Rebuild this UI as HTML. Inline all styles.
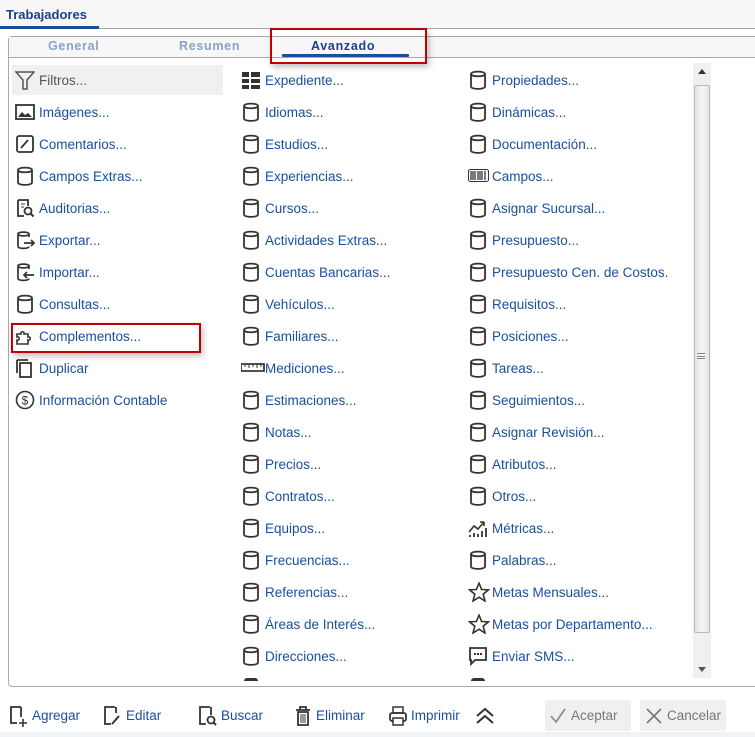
<!DOCTYPE html>
<html><head><meta charset="utf-8"><style>
*{margin:0;padding:0;box-sizing:border-box}
body{width:755px;height:737px;background:#fff;font-family:"Liberation Sans",sans-serif;position:relative;overflow:hidden}
.hdr{position:absolute;left:0;top:0;width:755px;height:29px;background:#f7f7f7;border-bottom:1px solid #aaa}
.hdr span{position:absolute;left:6px;top:7px;font-weight:bold;font-size:13px;color:#1c3f8f}
.hdr i{position:absolute;left:0;top:26px;width:99px;height:3px;background:#1a4fa0}
.panel{position:absolute;left:8px;top:36px;width:752px;height:651px;border:1px solid #aaa;border-radius:4px}
.tabs{position:absolute;left:9px;top:37px;width:746px;height:21px;background:#f7f7f7;border-bottom:1px solid #aaa}
.tab{position:absolute;top:2px;font-weight:bold;font-size:12.5px;letter-spacing:.7px;color:#8aa3cb}
.red{position:absolute;border:2px solid #c00000;box-shadow:2px 3px 6px rgba(0,0,0,.25)}
.it{position:absolute;height:22px;line-height:22px;font-size:13.5px;color:#1a4fa0;white-space:nowrap;margin-top:1px}
.it svg{position:absolute;left:0;top:0}
.it span{position:absolute;left:24px;top:0}
.sb{position:absolute;left:693px;top:63px;width:18px;height:615px;background:#f0f0f0}
.thumb{position:absolute;left:694px;top:85px;width:16px;height:548px;background:linear-gradient(90deg,#e4e4e4,#f6f6f6,#e4e4e4);border:1px solid #bbb;border-radius:2px}
.bt{position:absolute;top:705px;height:22px;line-height:22px;font-size:13.5px;color:#1a4fa0}
.bt svg{position:absolute;left:0;top:0}
.bt span{position:absolute;left:23px;white-space:nowrap}
.gb{position:absolute;top:700px;height:31px;background:#f0f0f0;color:#777;font-size:13.5px;line-height:31px}
</style></head><body>
<div class="hdr"><span>Trabajadores</span><i></i></div>
<div class="panel"></div>
<div class="tabs"></div>
<div class="tab" style="left:48px;top:39px">General</div>
<div class="tab" style="left:179px;top:39px">Resumen</div>
<div class="tab" style="left:311px;top:39px;color:#1c3f8f">Avanzado</div>
<div style="position:absolute;left:282px;top:54px;width:127px;height:3px;background:#1a4fa0;border-radius:1px"></div>
<div class="red" style="left:270px;top:28px;width:157px;height:36px"></div>
<div style="position:absolute;left:12px;top:65px;width:211px;height:30px;background:#f0f0f0"></div>
<div class="red" style="left:11px;top:323px;width:190px;height:30px"></div>
<div class="sb"></div><div class="thumb"></div>
<div style="position:absolute;left:698px;top:69px;border:4px solid transparent;border-bottom:5px solid #333;border-top:0"></div>
<div style="position:absolute;left:698px;top:667px;border:4px solid transparent;border-top:5px solid #555;border-bottom:0"></div>
<div style="position:absolute;left:697px;top:353px;width:8px;height:6px;border-top:1px solid #888;border-bottom:1px solid #888"></div>
<div style="position:absolute;left:697px;top:356px;width:8px;height:1px;background:#888"></div>
<div style="position:absolute;left:0;top:732px;width:755px;height:5px;background:#eef3f8"></div>

<svg width="0" height="0" style="position:absolute"><defs>
<symbol id="cyl" viewBox="0 0 20 20"><path d="M3 4C3 0.8 17 0.8 17 4V16.5C17 19.7 3 19.7 3 16.5Z M3 4C3 7 17 7 17 4" fill="none" stroke="#333" stroke-width="1.8"/></symbol>
</defs></svg>

<div class="it" style="left:15px;top:69px;color:#555"><svg width="20" height="20"><path d="M1 2H19L12 10V19H8V10Z" fill="none" stroke="#555" stroke-width="1.5"/></svg><span>Filtros...</span></div>
<div class="it" style="left:15px;top:101px"><svg width="20" height="20"><rect x="1" y="3" width="18" height="14" fill="none" stroke="#333" stroke-width="1.8"/><path d="M3 15L7 10L10 13L13 11L17 15Z" fill="#333"/></svg><span>Imágenes...</span></div>
<div class="it" style="left:15px;top:133px"><svg width="20" height="20"><rect x="2" y="2" width="16" height="16" rx="2" fill="none" stroke="#333" stroke-width="1.8"/><path d="M6 14L13 6" stroke="#333" stroke-width="1.8"/></svg><span>Comentarios...</span></div>
<div class="it" style="left:15px;top:165px"><svg width="20" height="20"><use href="#cyl"/></svg><span>Campos Extras...</span></div>
<div class="it" style="left:15px;top:197px"><svg width="20" height="20"><path d="M3 2H13V8M3 2V18H9" fill="none" stroke="#333" stroke-width="1.8"/><path d="M6 6H10M6 9H9" stroke="#333"/><circle cx="13" cy="13" r="3.5" fill="none" stroke="#333" stroke-width="1.8"/><path d="M15.5 15.5L18.5 18.5" stroke="#333" stroke-width="2"/></svg><span>Auditorias...</span></div>
<div class="it" style="left:15px;top:229px"><svg width="20" height="20"><path d="M14 7V4C14 1.5 3 1.5 3 4V16.5C3 19 14 19 14 16.5M3 4C3 6.5 14 6.5 14 4M9 13H19M16 10L19 13L16 16" fill="none" stroke="#333" stroke-width="1.7"/></svg><span>Exportar...</span></div>
<div class="it" style="left:15px;top:261px"><svg width="20" height="20"><path d="M14 7V4C14 1.5 3 1.5 3 4V16.5C3 19 14 19 14 16.5M3 4C3 6.5 14 6.5 14 4M9 13H19M12 10L9 13L12 16" fill="none" stroke="#333" stroke-width="1.7"/></svg><span>Importar...</span></div>
<div class="it" style="left:15px;top:293px"><svg width="20" height="20"><use href="#cyl"/></svg><span>Consultas...</span></div>
<div class="it" style="left:15px;top:325px"><svg width="20" height="20"><path d="M2 8H6C5 5 10 5 9 8H13V11C16 10 16 15 13 14V18H2V14C5 15 5 10 2 11Z" fill="none" stroke="#333" stroke-width="1.6"/></svg><span>Complementos...</span></div>
<div class="it" style="left:15px;top:357px"><svg width="20" height="20"><path d="M2 2V15M2 2H13" stroke="#333" stroke-width="1.8" fill="none"/><rect x="5" y="5" width="11" height="14" fill="none" stroke="#333" stroke-width="1.8"/></svg><span>Duplicar</span></div>
<div class="it" style="left:15px;top:389px"><svg width="20" height="20"><circle cx="10" cy="10" r="8.5" fill="none" stroke="#333" stroke-width="1.6"/><text x="10" y="14.5" font-size="12" text-anchor="middle" fill="#333" font-family="Liberation Sans">$</text></svg><span>Información Contable</span></div>

<div class="it" style="left:241px;top:69px"><svg width="20" height="20"><path d="M1 2H8V7H1ZM10 2H19V7H10ZM1 9H8V13H1ZM10 9H19V13H10ZM1 15H8V19H1ZM10 15H19V19H10Z" fill="#333"/></svg><span>Expediente...</span></div>
<div class="it" style="left:241px;top:101px"><svg width="20" height="20"><use href="#cyl"/></svg><span>Idiomas...</span></div>
<div class="it" style="left:241px;top:133px"><svg width="20" height="20"><use href="#cyl"/></svg><span>Estudios...</span></div>
<div class="it" style="left:241px;top:165px"><svg width="20" height="20"><use href="#cyl"/></svg><span>Experiencias...</span></div>
<div class="it" style="left:241px;top:197px"><svg width="20" height="20"><use href="#cyl"/></svg><span>Cursos...</span></div>
<div class="it" style="left:241px;top:229px"><svg width="20" height="20"><use href="#cyl"/></svg><span>Actividades Extras...</span></div>
<div class="it" style="left:241px;top:261px"><svg width="20" height="20"><use href="#cyl"/></svg><span>Cuentas Bancarias...</span></div>
<div class="it" style="left:241px;top:293px"><svg width="20" height="20"><use href="#cyl"/></svg><span>Vehículos...</span></div>
<div class="it" style="left:241px;top:325px"><svg width="20" height="20"><use href="#cyl"/></svg><span>Familiares...</span></div>
<div class="it" style="left:241px;top:357px"><svg width="24" height="20"><rect x="0" y="6" width="23" height="7" fill="none" stroke="#333" stroke-width="1.7"/><path d="M4 6V9M8 6V10M12 6V9M16 6V10M20 6V9" stroke="#333"/></svg><span>Mediciones...</span></div>
<div class="it" style="left:241px;top:389px"><svg width="20" height="20"><use href="#cyl"/></svg><span>Estimaciones...</span></div>
<div class="it" style="left:241px;top:421px"><svg width="20" height="20"><use href="#cyl"/></svg><span>Notas...</span></div>
<div class="it" style="left:241px;top:453px"><svg width="20" height="20"><use href="#cyl"/></svg><span>Precios...</span></div>
<div class="it" style="left:241px;top:485px"><svg width="20" height="20"><use href="#cyl"/></svg><span>Contratos...</span></div>
<div class="it" style="left:241px;top:517px"><svg width="20" height="20"><use href="#cyl"/></svg><span>Equipos...</span></div>
<div class="it" style="left:241px;top:549px"><svg width="20" height="20"><use href="#cyl"/></svg><span>Frecuencias...</span></div>
<div class="it" style="left:241px;top:581px"><svg width="20" height="20"><use href="#cyl"/></svg><span>Referencias...</span></div>
<div class="it" style="left:241px;top:613px"><svg width="20" height="20"><use href="#cyl"/></svg><span>Áreas de Interés...</span></div>
<div class="it" style="left:241px;top:645px"><svg width="20" height="20"><use href="#cyl"/></svg><span>Direcciones...</span></div>

<div class="it" style="left:468px;top:69px"><svg width="20" height="20"><use href="#cyl"/></svg><span>Propiedades...</span></div>
<div class="it" style="left:468px;top:101px"><svg width="20" height="20"><use href="#cyl"/></svg><span>Dinámicas...</span></div>
<div class="it" style="left:468px;top:133px"><svg width="20" height="20"><use href="#cyl"/></svg><span>Documentación...</span></div>
<div class="it" style="left:468px;top:165px"><svg width="22" height="20"><rect x="0.5" y="3.5" width="20" height="12" rx="2" fill="none" stroke="#333"/><path d="M3 5V14M5 5V14M7 5V14M10 5V14M12 5V14M14 5V14M17 5V14" stroke="#333" stroke-width="1.3"/></svg><span>Campos...</span></div>
<div class="it" style="left:468px;top:197px"><svg width="20" height="20"><use href="#cyl"/></svg><span>Asignar Sucursal...</span></div>
<div class="it" style="left:468px;top:229px"><svg width="20" height="20"><use href="#cyl"/></svg><span>Presupuesto...</span></div>
<div class="it" style="left:468px;top:261px"><svg width="20" height="20"><use href="#cyl"/></svg><span>Presupuesto Cen. de Costos.</span></div>
<div class="it" style="left:468px;top:293px"><svg width="20" height="20"><use href="#cyl"/></svg><span>Requisitos...</span></div>
<div class="it" style="left:468px;top:325px"><svg width="20" height="20"><use href="#cyl"/></svg><span>Posiciones...</span></div>
<div class="it" style="left:468px;top:357px"><svg width="20" height="20"><use href="#cyl"/></svg><span>Tareas...</span></div>
<div class="it" style="left:468px;top:389px"><svg width="20" height="20"><use href="#cyl"/></svg><span>Seguimientos...</span></div>
<div class="it" style="left:468px;top:421px"><svg width="20" height="20"><use href="#cyl"/></svg><span>Asignar Revisión...</span></div>
<div class="it" style="left:468px;top:453px"><svg width="20" height="20"><use href="#cyl"/></svg><span>Atributos...</span></div>
<div class="it" style="left:468px;top:485px"><svg width="20" height="20"><use href="#cyl"/></svg><span>Otros...</span></div>
<div class="it" style="left:468px;top:517px"><svg width="22" height="20"><path d="M1 14L6 8L10 11L16 4M16 4H12M16 4V8" fill="none" stroke="#333" stroke-width="1.6"/><path d="M2 19V17M6 19V15M10 19V16M14 19V13M18 19V10" stroke="#333" stroke-width="1.8"/></svg><span>Métricas...</span></div>
<div class="it" style="left:468px;top:549px"><svg width="20" height="20"><use href="#cyl"/></svg><span>Palabras...</span></div>
<div class="it" style="left:468px;top:581px"><svg width="22" height="20"><path d="M11 1L13.6 7.5L20.5 7.8L15.2 12.2L17 19L11 15.2L5 19L6.8 12.2L1.5 7.8L8.4 7.5Z" fill="none" stroke="#333" stroke-width="1.6"/></svg><span>Metas Mensuales...</span></div>
<div class="it" style="left:468px;top:613px"><svg width="22" height="20"><path d="M11 1L13.6 7.5L20.5 7.8L15.2 12.2L17 19L11 15.2L5 19L6.8 12.2L1.5 7.8L8.4 7.5Z" fill="none" stroke="#333" stroke-width="1.6"/></svg><span>Metas por Departamento...</span></div>
<div class="it" style="left:468px;top:645px"><svg width="20" height="20"><path d="M2 2H18V14H7L3 18V14H2Z" fill="none" stroke="#333" stroke-width="1.8"/><path d="M6 8H8M9 8H11M12 8H14" stroke="#333" stroke-width="2"/></svg><span>Enviar SMS...</span></div>
<div style="position:absolute;left:244px;top:678px;width:14px;height:3px;background:#333;border-radius:7px 7px 0 0"></div>
<div style="position:absolute;left:471px;top:678px;width:14px;height:3px;background:#333;border-radius:7px 7px 0 0"></div>

<div class="bt" style="left:9px"><svg width="20" height="22"><path d="M12 2H2V18H8M12 2V12" fill="none" stroke="#333" stroke-width="1.8"/><path d="M14 14V22M10 18H18" stroke="#333" stroke-width="1.6"/></svg><span>Agregar</span></div>
<div class="bt" style="left:103px"><svg width="20" height="22"><path d="M12 2H2V19H8M13 2V8" fill="none" stroke="#333" stroke-width="1.8"/><path d="M9 19L16 11" stroke="#333" stroke-width="2"/></svg><span>Editar</span></div>
<div class="bt" style="left:198px"><svg width="20" height="22"><path d="M12 2H2V19H8M13 2V10" fill="none" stroke="#333" stroke-width="1.8"/><circle cx="13" cy="15" r="3.5" fill="none" stroke="#333" stroke-width="1.8"/><path d="M15.5 17.5L18 20" stroke="#333" stroke-width="2"/></svg><span>Buscar</span></div>
<div class="bt" style="left:293px"><svg width="20" height="22"><path d="M3 5H17M7 5V2H13V5M5 7H15V20H5Z" fill="none" stroke="#333" stroke-width="1.8"/><path d="M8 9V18M10 9V18M12 9V18" stroke="#333"/></svg><span>Eliminar</span></div>
<div class="bt" style="left:388px"><svg width="20" height="22"><rect x="5" y="2" width="10" height="6" fill="none" stroke="#333" stroke-width="1.5"/><rect x="2" y="8" width="16" height="8" rx="2" fill="none" stroke="#333" stroke-width="1.8"/><rect x="5" y="13" width="10" height="7" fill="#fff" stroke="#333" stroke-width="1.5"/></svg><span>Imprimir</span></div>
<svg style="position:absolute;left:474px;top:706px" width="22" height="20"><path d="M3 10L11 3L19 10M3 17L11 10L19 17" fill="none" stroke="#333" stroke-width="2"/></svg>
<div class="gb" style="left:545px;width:86px"><svg style="position:absolute;left:4px;top:7px" width="18" height="18"><path d="M2 9L7 15L16 2" fill="none" stroke="#888" stroke-width="1.6"/></svg><span style="position:absolute;left:26px">Aceptar</span></div>
<div class="gb" style="left:640px;width:86px"><svg style="position:absolute;left:5px;top:7px" width="18" height="18"><path d="M2 2L16 16M16 2L2 16" stroke="#777" stroke-width="1.6"/></svg><span style="position:absolute;left:27px">Cancelar</span></div>
</body></html>
